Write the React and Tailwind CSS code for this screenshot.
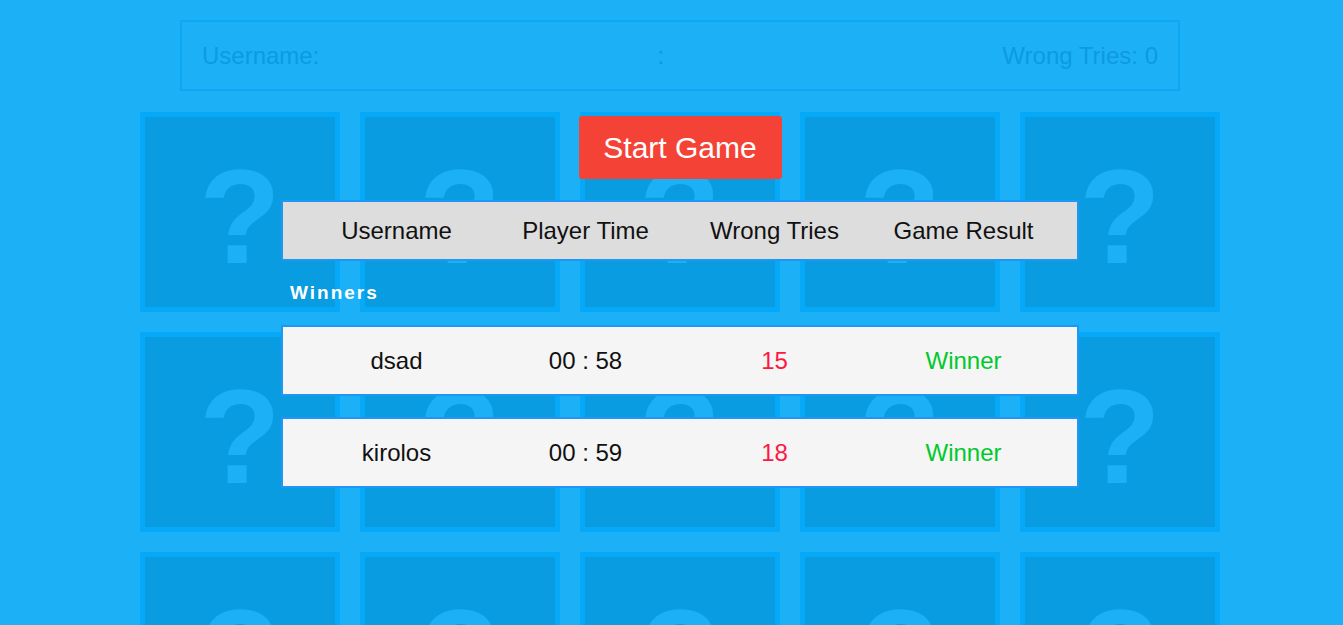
const players = [
  { name: "dsad", time: "00 : 58", tries: 15, result: "Winner" },
  { name: "kirolos", time: "00 : 59", tries: 18, result: "Winner" },
];

function Card() {
  return (
    <div className="w-[200px] h-[200px] border-[5px] border-[#06a8f8] bg-[#0a9ce0] flex items-center justify-center overflow-hidden">
      <span className="text-[134px] font-bold leading-none text-[#1cb1f6] pt-[10px]">?</span>
    </div>
  );
}

export default function App() {
  return (
    <div
      className="relative h-[625px] overflow-hidden bg-[#1cb1f6]"
      style={{ fontFamily: '"Liberation Sans", Arial, sans-serif' }}
    >
      {/* info bar */}
      <div className="pt-[20px] pl-[180px]">
        <div className="w-[1000px] h-[71px] border-2 border-[#0aa8f6] px-[20px] flex items-center justify-between text-[24px] text-[#0c9ae0]">
          <span>Username:</span>
          <span>:</span>
          <span>Wrong Tries: 0</span>
        </div>
      </div>

      {/* cards */}
      <div className="pl-[140px] pt-[21px] grid grid-cols-[repeat(5,200px)] gap-[20px]">
        {Array.from({ length: 15 }).map((_, i) => (
          <Card key={i} />
        ))}
      </div>

      {/* result popup */}
      <div className="absolute top-[116px] left-[281px] w-[798px] flex flex-col items-center">
        <button className="h-[63px] w-[203px] rounded-[3px] bg-[#f44336] text-white text-[30px]">
          Start Game
        </button>

        <div className="mt-[21px] w-full h-[61px] border-2 border-[#2196f3] bg-[#dddddd] px-[19px] grid grid-cols-4 items-center text-center text-[24px] text-[#111]">
          <span>Username</span>
          <span>Player Time</span>
          <span>Wrong Tries</span>
          <span>Game Result</span>
        </div>

        <div className="w-full h-[64px] flex items-center pl-[9px]">
          <span className="text-[19px] font-bold text-white tracking-[2px]">Winners</span>
        </div>

        <div className="w-full flex flex-col gap-[21px]">
          {players.map((p) => (
            <div
              key={p.name}
              className="w-full h-[71px] border-2 border-[#2196f3] bg-[#f5f5f5] px-[19px] grid grid-cols-4 items-center text-center text-[24px]"
            >
              <span className="text-[#111]">{p.name}</span>
              <span className="text-[#111]">{p.time}</span>
              <span className="text-[#ff1744]">{p.tries}</span>
              <span className="text-[#00c92e]">{p.result}</span>
            </div>
          ))}
        </div>
      </div>
    </div>
  );
}
